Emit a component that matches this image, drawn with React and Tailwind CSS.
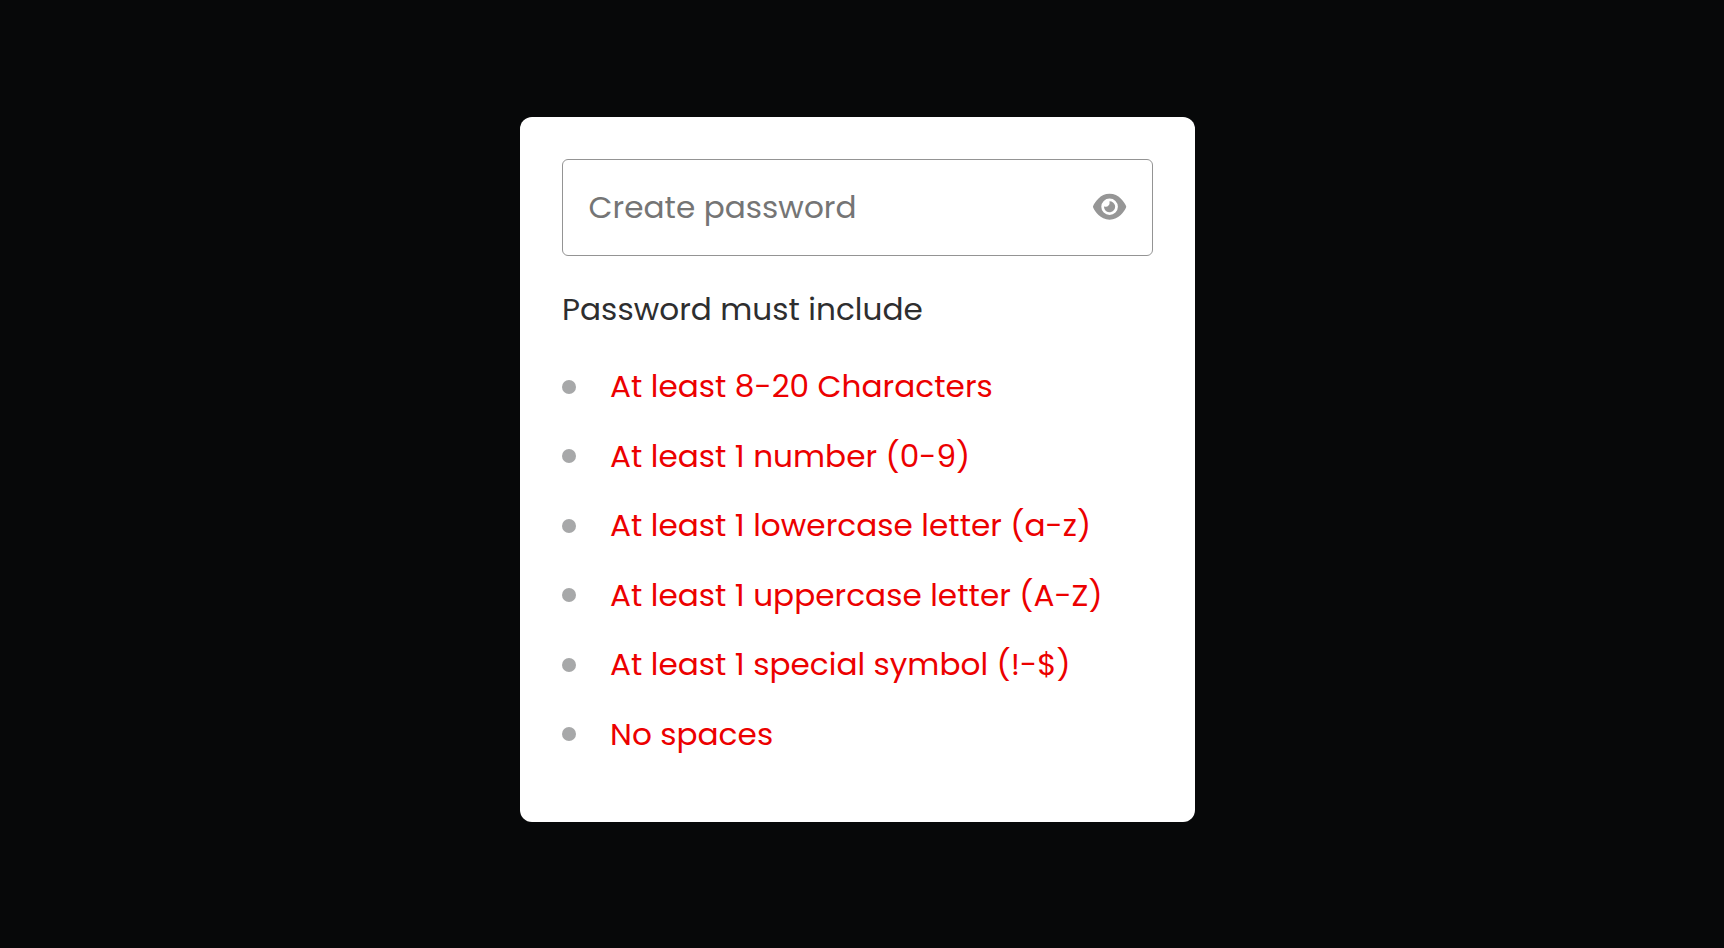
import { FaEye } from "react-icons/fa6";

const rules = [
  "At least 8-20 Characters",
  "At least 1 number (0-9)",
  "At least 1 lowercase letter (a-z)",
  "At least 1 uppercase letter (A-Z)",
  "At least 1 special symbol (!-$)",
  "No spaces",
];

function Rule({ children }) {
  return (
    <li className="flex h-[69.5px] items-center gap-[34px] text-[#ec0000]">
      <span className="size-3.5 shrink-0 rounded-full bg-[#a7a8a9]" />
      <span className="pb-[0.4px] whitespace-nowrap">{children}</span>
    </li>
  );
}

export default function App() {
  return (
    <main className="flex h-[948px] items-start justify-center bg-[#070809] pt-[117px] pr-[9px] font-[Poppins,Inter,sans-serif]">
      <section className="h-[705px] w-[675px] rounded-xl bg-white p-[42px] text-[31.12px] tracking-[0.04px]">
        <div className="flex h-[97px] items-center rounded-md border border-[#949494] px-[25.5px]">
          <input
            type="text"
            placeholder="Create password"
            className="min-w-0 flex-1 outline-none placeholder:text-[#757575]"
          />
          <button type="button" aria-label="Show password" className="pb-[1.2px]">
            <FaEye className="h-[29.5px] w-[33.2px] text-[#969696]" />
          </button>
        </div>
        <h1 className="mt-[30px] h-[46px] leading-[46px] text-[#2e2e2f]">
          Password must include
        </h1>
        <ul className="mt-5">
          {rules.map((rule) => (
            <Rule key={rule}>{rule}</Rule>
          ))}
        </ul>
      </section>
    </main>
  );
}
